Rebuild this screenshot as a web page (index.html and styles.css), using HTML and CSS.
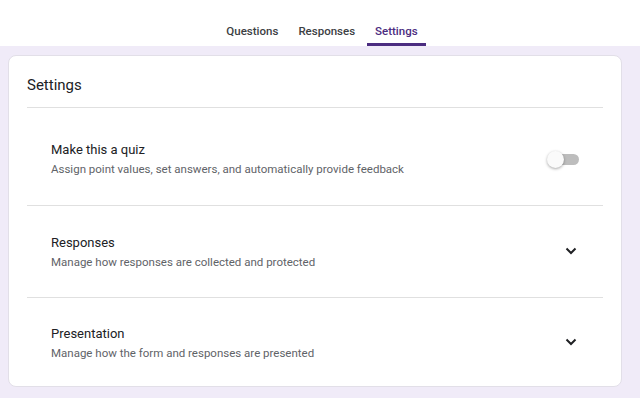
FILE: index.html
```html
<!DOCTYPE html>
<html lang="en">
<head>
  <meta charset="UTF-8" />
  <meta name="viewport" content="width=device-width, initial-scale=1.0"/>
  <title>Settings</title>
  <link rel="stylesheet" href="styles.css">
</head>
<body>
  <div class="topbar">
    <nav class="tabs">
      <a class="tab">Questions</a>
      <a class="tab">Responses</a>
      <a class="tab active">Settings</a>
    </nav>
  </div>

  <div class="page">
    <div class="card">
      <h2>Settings</h2>

      <div class="item first">
        <div class="text">
          <div class="title">Make this a quiz</div>
          <div class="desc">Assign point values, set answers, and automatically provide feedback</div>
        </div>
        <div class="switch"><span class="knob"></span></div>
      </div>

      <div class="item">
        <div class="text">
          <div class="title">Responses</div>
          <div class="desc">Manage how responses are collected and protected</div>
        </div>
        <svg class="chevron" viewBox="0 0 12 8" width="12" height="8">
          <path d="M1.5 1.5 L6 6 L10.5 1.5" />
        </svg>
      </div>

      <div class="item last">
        <div class="text">
          <div class="title">Presentation</div>
          <div class="desc">Manage how the form and responses are presented</div>
        </div>
        <svg class="chevron" viewBox="0 0 12 8" width="12" height="8">
          <path d="M1.5 1.5 L6 6 L10.5 1.5" />
        </svg>
      </div>
    </div>
  </div>
</body>
</html>
```

FILE: styles.css
```css
body {
  margin: 0;
  background: #f0ebf8;
  font-family: Roboto, "Liberation Sans", sans-serif;
  color: #202124;
}

.topbar {
  background: #fff;
  height: 46px;
}

.tabs {
  display: flex;
  justify-content: center;
  gap: 4px;
  height: 46px;
  padding-left: 4px;
}

.tab {
  display: flex;
  align-items: flex-end;
  padding: 0 8px 5px;
  font-size: 11.5px;
  font-weight: 500;
  color: #3c4043;
  border-bottom: 3px solid transparent;
  box-sizing: border-box;
}

.tab.active {
  color: #4b2c80;
  border-bottom-color: #4b2c80;
}

.page {
  padding: 9px 18px 0 8px;
}

.card {
  background: #fff;
  border: 1px solid #e2dfe8;
  border-radius: 8px;
  padding: 0 18px;
  height: 330px;
}

h2 {
  margin: 0;
  font-size: 15px;
  font-weight: 400;
  line-height: 20px;
  padding: 19px 0 12px;
  border-bottom: 1px solid #e0e0e0;
}

.item {
  display: flex;
  align-items: center;
  padding: 28px 24px 26px;
  border-bottom: 1px solid #e0e0e0;
}

.item.first {
  padding-top: 33px;
  padding-bottom: 27px;
}

.item.last {
  padding-top: 27px;
  border-bottom: none;
}

.text {
  flex: 1;
}

.title {
  font-size: 13px;
  line-height: 18px;
  margin-bottom: 1px;
}

.desc {
  font-size: 11.5px;
  line-height: 18px;
  color: #5f6368;
}

.switch {
  position: relative;
  width: 26px;
  height: 11px;
  background: #bdbdbd;
  border-radius: 6px;
}

.knob {
  position: absolute;
  left: -6px;
  top: -3px;
  width: 17px;
  height: 17px;
  border-radius: 50%;
  background: #fafafa;
  box-shadow: 0 1px 3px rgba(0,0,0,0.35);
}

.chevron {
  margin-right: 2px;
  margin-top: -3px;
}

.chevron path {
  fill: none;
  stroke: #202124;
  stroke-width: 2;
}
```
